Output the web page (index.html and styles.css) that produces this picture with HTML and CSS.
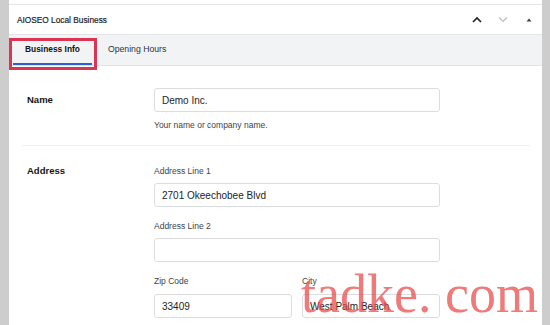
FILE: index.html
```html
<!DOCTYPE html>
<html lang="en">
<head>
    <meta charset="UTF-8">
    <meta name="viewport" content="width=device-width, initial-scale=1.0">
    <title>AIOSEO Local Business</title>
    <link rel="stylesheet" href="styles.css">
</head>
<body>

<div class="panel">
    <div class="top-strip"></div>

    <div class="box-header">
        <h2 class="box-title">AIOSEO Local Business</h2>
        <div class="box-actions">
            <span class="act">
                <svg width="10" height="7" viewBox="0 0 10 7"><path d="M1 6 L5 2 L9 6" fill="none" stroke="#1d2327" stroke-width="1.7"/></svg>
            </span>
            <span class="act">
                <svg width="10" height="7" viewBox="0 0 10 7"><path d="M1 1.5 L5 5.5 L9 1.5" fill="none" stroke="#b8bcc2" stroke-width="1.1"/></svg>
            </span>
            <span class="act">
                <svg width="6" height="4" viewBox="0 0 6 4"><path d="M0.5 3.5 L3 0.5 L5.5 3.5 Z" fill="#3c434a"/></svg>
            </span>
        </div>
    </div>

    <div class="tabs">
        <div class="tab active">Business Info</div>
        <div class="tab">Opening Hours</div>
        <div class="highlight"></div>
    </div>

    <div class="row">
        <div class="row-label">Name</div>
        <div class="row-field">
            <input class="text-input" type="text" value="Demo Inc.">
            <p class="help">Your name or company name.</p>
        </div>
    </div>

    <div class="row row-address">
        <div class="row-label">Address</div>
        <div class="row-field">
            <div class="field">
                <label class="field-label">Address Line 1</label>
                <input class="text-input" type="text" value="2701 Okeechobee Blvd">
            </div>
            <div class="field">
                <label class="field-label">Address Line 2</label>
                <input class="text-input" type="text" value="">
            </div>
            <div class="field field-pair">
                <div>
                    <label class="field-label">Zip Code</label>
                    <input class="text-input" type="text" value="33409">
                </div>
                <div>
                    <label class="field-label">City</label>
                    <input class="text-input" type="text" value="West Palm Beach">
                </div>
            </div>
        </div>
    </div>
</div>

<div class="watermark">tadke. com</div>

</body>
</html>
```

FILE: styles.css
```css
html, body {
    margin: 0;
    height: 325px;
    overflow: hidden;
}
body {
    font-family: "Liberation Sans", Arial, sans-serif;
    background-color: #cdcdcd;
    color: #1d2327;
    position: relative;
}
.panel {
    margin: 0 8px 0 9px;
    background-color: #fff;
    height: 325px;
    overflow: hidden;
}
.top-strip {
    height: 4px;
    border-bottom: 1px solid #e4e5e7;
}
.box-header {
    height: 29px;
    border-bottom: 1px solid #e2e4e7;
    display: flex;
    align-items: center;
    justify-content: space-between;
    padding-left: 8px;
}
.box-title {
    margin: 0;
    font-size: 8.3px;
    font-weight: normal;
    color: #1d2327;
    -webkit-text-stroke: 0.2px #1d2327;
}
.box-actions {
    display: flex;
}
.act {
    width: 26px;
    height: 29px;
    display: flex;
    align-items: center;
    justify-content: center;
}
.tabs {
    position: relative;
    height: 30px;
    background-color: #f2f3f4;
    border-bottom: 1px solid #e2e4e7;
    display: flex;
    padding-left: 4px;
    gap: 4px;
}
.tab {
    box-sizing: border-box;
    height: 30px;
    padding: 0 12px;
    display: flex;
    align-items: center;
    font-size: 8.7px;
    color: #2c3338;
    border-bottom: 2px solid transparent;
}
.tab.active {
    font-weight: bold;
    font-size: 8.4px;
    color: #141414;
    border-bottom-color: #2a5fd8;
}
.highlight {
    position: absolute;
    left: 0;
    top: 3px;
    width: 88px;
    height: 32px;
    box-sizing: border-box;
    border: 3px solid #dc3553;
    z-index: 2;
}
.row {
    display: grid;
    grid-template-columns: 127px 286px;
    margin: 0 12px 0 13px;
    padding: 22px 0 14px 5px;
    border-bottom: 1px solid #eceef0;
}
.row-label {
    font-size: 9.5px;
    font-weight: bold;
    line-height: 24px;
    color: #141414;
}
.text-input {
    display: block;
    box-sizing: border-box;
    width: 100%;
    height: 24px;
    margin: 0;
    padding: 0 7px;
    border: 1px solid #dcdde0;
    border-radius: 3px;
    font-family: "Liberation Sans", Arial, sans-serif;
    font-size: 10px;
    color: #1d2327;
    background: #fff;
    outline: none;
}
.help {
    margin: 7px 0 0;
    font-size: 8.5px;
    line-height: 12px;
    color: #3c434a;
}
.row-address {
    padding-top: 19px;
    border-bottom: none;
}
.row-address .row-label {
    line-height: 12px;
}
.field {
    margin-bottom: 13px;
}
.field-label {
    display: block;
    font-size: 8.5px;
    line-height: 12px;
    margin-bottom: 6px;
    color: #3c434a;
}
.field-pair {
    display: grid;
    grid-template-columns: 138px 138px;
    gap: 10px;
    margin-bottom: 0;
}
.field-pair .field-label {
    margin-bottom: 7px;
}
.watermark {
    position: absolute;
    left: 301px;
    top: 267px;
    font-family: "Liberation Serif", "Times New Roman", serif;
    font-size: 54px;
    line-height: 1;
    color: rgba(232, 70, 70, 0.72);
    white-space: nowrap;
    z-index: 5;
}
```
